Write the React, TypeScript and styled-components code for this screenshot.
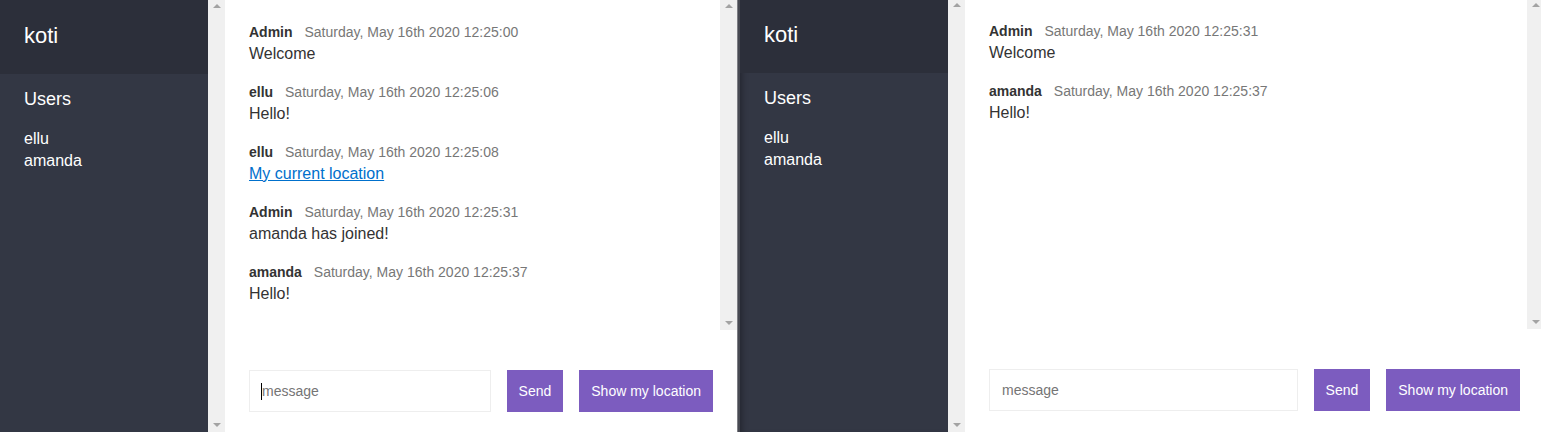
import React from "react";
import styled, { createGlobalStyle } from "styled-components";

const GlobalStyle = createGlobalStyle`
  html, body { margin: 0; padding: 0; background: #ffffff; }
  body {
    font-family: "Liberation Sans", Arial, Helvetica, sans-serif;
    color: #333333;
    font-size: 16px;
  }
  * { box-sizing: border-box; }
`;

const Page = styled.div`
  display: flex;
  width: 1541px;
  height: 432px;
  overflow: hidden;
  align-items: flex-start;
`;

const Window = styled.div<{ $width: number; $shift: number }>`
  display: flex;
  flex-shrink: 0;
  width: ${(p) => p.$width}px;
  height: ${(p) => 432 - p.$shift}px;
  margin-top: ${(p) => p.$shift}px;
  background: #ffffff;
`;

const Separator = styled.div`
  flex-shrink: 0;
  width: 3px;
  height: 432px;
  border-left: 1px solid #7d7e84;
  background: #474952;
`;

const Sidebar = styled.aside`
  display: flex;
  flex-shrink: 0;
  width: 225px;
  height: 100%;
  background: #333744;
  color: #ffffff;
`;

const SidebarContent = styled.div<{ $shadow?: boolean }>`
  width: 208px;
  display: flex;
  flex-direction: column;
  box-shadow: ${(p) => (p.$shadow ? "inset 6px 0 6px -4px rgba(0,0,0,0.3)" : "none")};
`;

const RoomTitle = styled.h2`
  margin: 0;
  height: 74px;
  padding: 22px 24px 0 24px;
  background: #2c2f3a;
  font-size: 22px;
  line-height: 27px;
  font-weight: normal;
`;

const ListTitle = styled.h3`
  margin: 0;
  padding: 13px 24px 0 24px;
  font-size: 18px;
  line-height: 24px;
  font-weight: normal;
`;

const Users = styled.ul`
  list-style: none;
  margin: 0;
  padding: 17px 24px 0 24px;
  font-size: 16px;
  line-height: 22px;
`;

const ScrollTrack = styled.div<{ $height?: number }>`
  flex-shrink: 0;
  width: 17px;
  height: ${(p) => (p.$height ? `${p.$height}px` : "100%")};
  background: #f0f0f0;
  display: flex;
  flex-direction: column;
  justify-content: space-between;
  align-items: center;
  padding: 4px 0 5px 0;
`;

const Arrow = styled.span<{ $down?: boolean }>`
  width: 0;
  height: 0;
  border-left: 4px solid transparent;
  border-right: 4px solid transparent;
  ${(p) =>
    p.$down
      ? "border-top: 4px solid #a3a3a3;"
      : "border-bottom: 4px solid #a3a3a3;"}
`;

const Main = styled.main`
  flex: 1;
  min-width: 0;
  display: flex;
  flex-direction: column;
  height: 100%;
`;

const MessagesArea = styled.div`
  display: flex;
  height: 330px;
  flex-shrink: 0;
`;

const Messages = styled.div`
  flex: 1;
  padding: 22px 24px 0 24px;
  overflow: hidden;
`;

const Message = styled.div`
  margin-bottom: 17px;
`;

const Meta = styled.p`
  margin: 0;
  font-size: 14px;
  line-height: 21px;
  color: #777777;
  white-space: nowrap;
`;

const Name = styled.span`
  font-weight: bold;
  color: #333333;
  margin-right: 8px;
`;

const Text = styled.p`
  margin: 0;
  font-size: 16px;
  line-height: 22px;
  color: #333333;
`;

const Link = styled.a`
  color: #0070cc;
  text-decoration: underline;
`;

const Compose = styled.div`
  display: flex;
  gap: 16px;
  padding: 40px 24px 0 24px;
`;

const InputBox = styled.div`
  position: relative;
  flex: 1;
  min-width: 0;
  display: flex;
`;

const Input = styled.input`
  flex: 1;
  min-width: 0;
  height: 42px;
  border: 1px solid #eeeeee;
  padding: 0 12px;
  font-family: "Liberation Sans", Arial, sans-serif;
  font-size: 14px;
  color: #333333;
  outline: none;
  caret-color: #000000;
  &::placeholder { color: #757575; }
`;

const Caret = styled.span`
  position: absolute;
  left: 12px;
  top: 13px;
  width: 1px;
  height: 17px;
  background: #000000;
  pointer-events: none;
`;

const Button = styled.button`
  flex-shrink: 0;
  height: 42px;
  padding: 0 12px;
  background: #7c5cbf;
  border: none;
  color: #ffffff;
  font-family: "Liberation Sans", Arial, sans-serif;
  font-size: 14px;
  cursor: pointer;
`;

type Msg = { name: string; time: string; text: string; link?: boolean };

const leftMessages: Msg[] = [
  { name: "Admin", time: "Saturday, May 16th 2020 12:25:00", text: "Welcome" },
  { name: "ellu", time: "Saturday, May 16th 2020 12:25:06", text: "Hello!" },
  { name: "ellu", time: "Saturday, May 16th 2020 12:25:08", text: "My current location", link: true },
  { name: "Admin", time: "Saturday, May 16th 2020 12:25:31", text: "amanda has joined!" },
  { name: "amanda", time: "Saturday, May 16th 2020 12:25:37", text: "Hello!" },
];

const rightMessages: Msg[] = [
  { name: "Admin", time: "Saturday, May 16th 2020 12:25:31", text: "Welcome" },
  { name: "amanda", time: "Saturday, May 16th 2020 12:25:37", text: "Hello!" },
];

function ChatWindow({
  width,
  shift,
  messages,
  focus,
  shadow,
}: {
  width: number;
  shift: number;
  messages: Msg[];
  focus?: boolean;
  shadow?: boolean;
}) {
  return (
    <Window $width={width} $shift={shift}>
      <Sidebar>
        <SidebarContent $shadow={shadow}>
          <RoomTitle>koti</RoomTitle>
          <ListTitle>Users</ListTitle>
          <Users>
            <li>ellu</li>
            <li>amanda</li>
          </Users>
        </SidebarContent>
        <ScrollTrack>
          <Arrow />
          <Arrow $down />
        </ScrollTrack>
      </Sidebar>
      <Main>
        <MessagesArea>
          <Messages>
            {messages.map((m, i) => (
              <Message key={i}>
                <Meta>
                  <Name>{m.name}</Name> {m.time}
                </Meta>
                <Text>{m.link ? <Link href="#">{m.text}</Link> : m.text}</Text>
              </Message>
            ))}
          </Messages>
          <ScrollTrack $height={330}>
            <Arrow />
            <Arrow $down />
          </ScrollTrack>
        </MessagesArea>
        <Compose>
          <InputBox>
            <Input placeholder="message" />
            {focus && <Caret />}
          </InputBox>
          <Button>Send</Button>
          <Button>Show my location</Button>
        </Compose>
      </Main>
    </Window>
  );
}

export default function App() {
  return (
    <>
      <GlobalStyle />
      <Page>
        <ChatWindow width={737} shift={0} messages={leftMessages} focus />
        <Separator />
        <ChatWindow width={804} shift={-1} messages={rightMessages} shadow />
      </Page>
    </>
  );
}
